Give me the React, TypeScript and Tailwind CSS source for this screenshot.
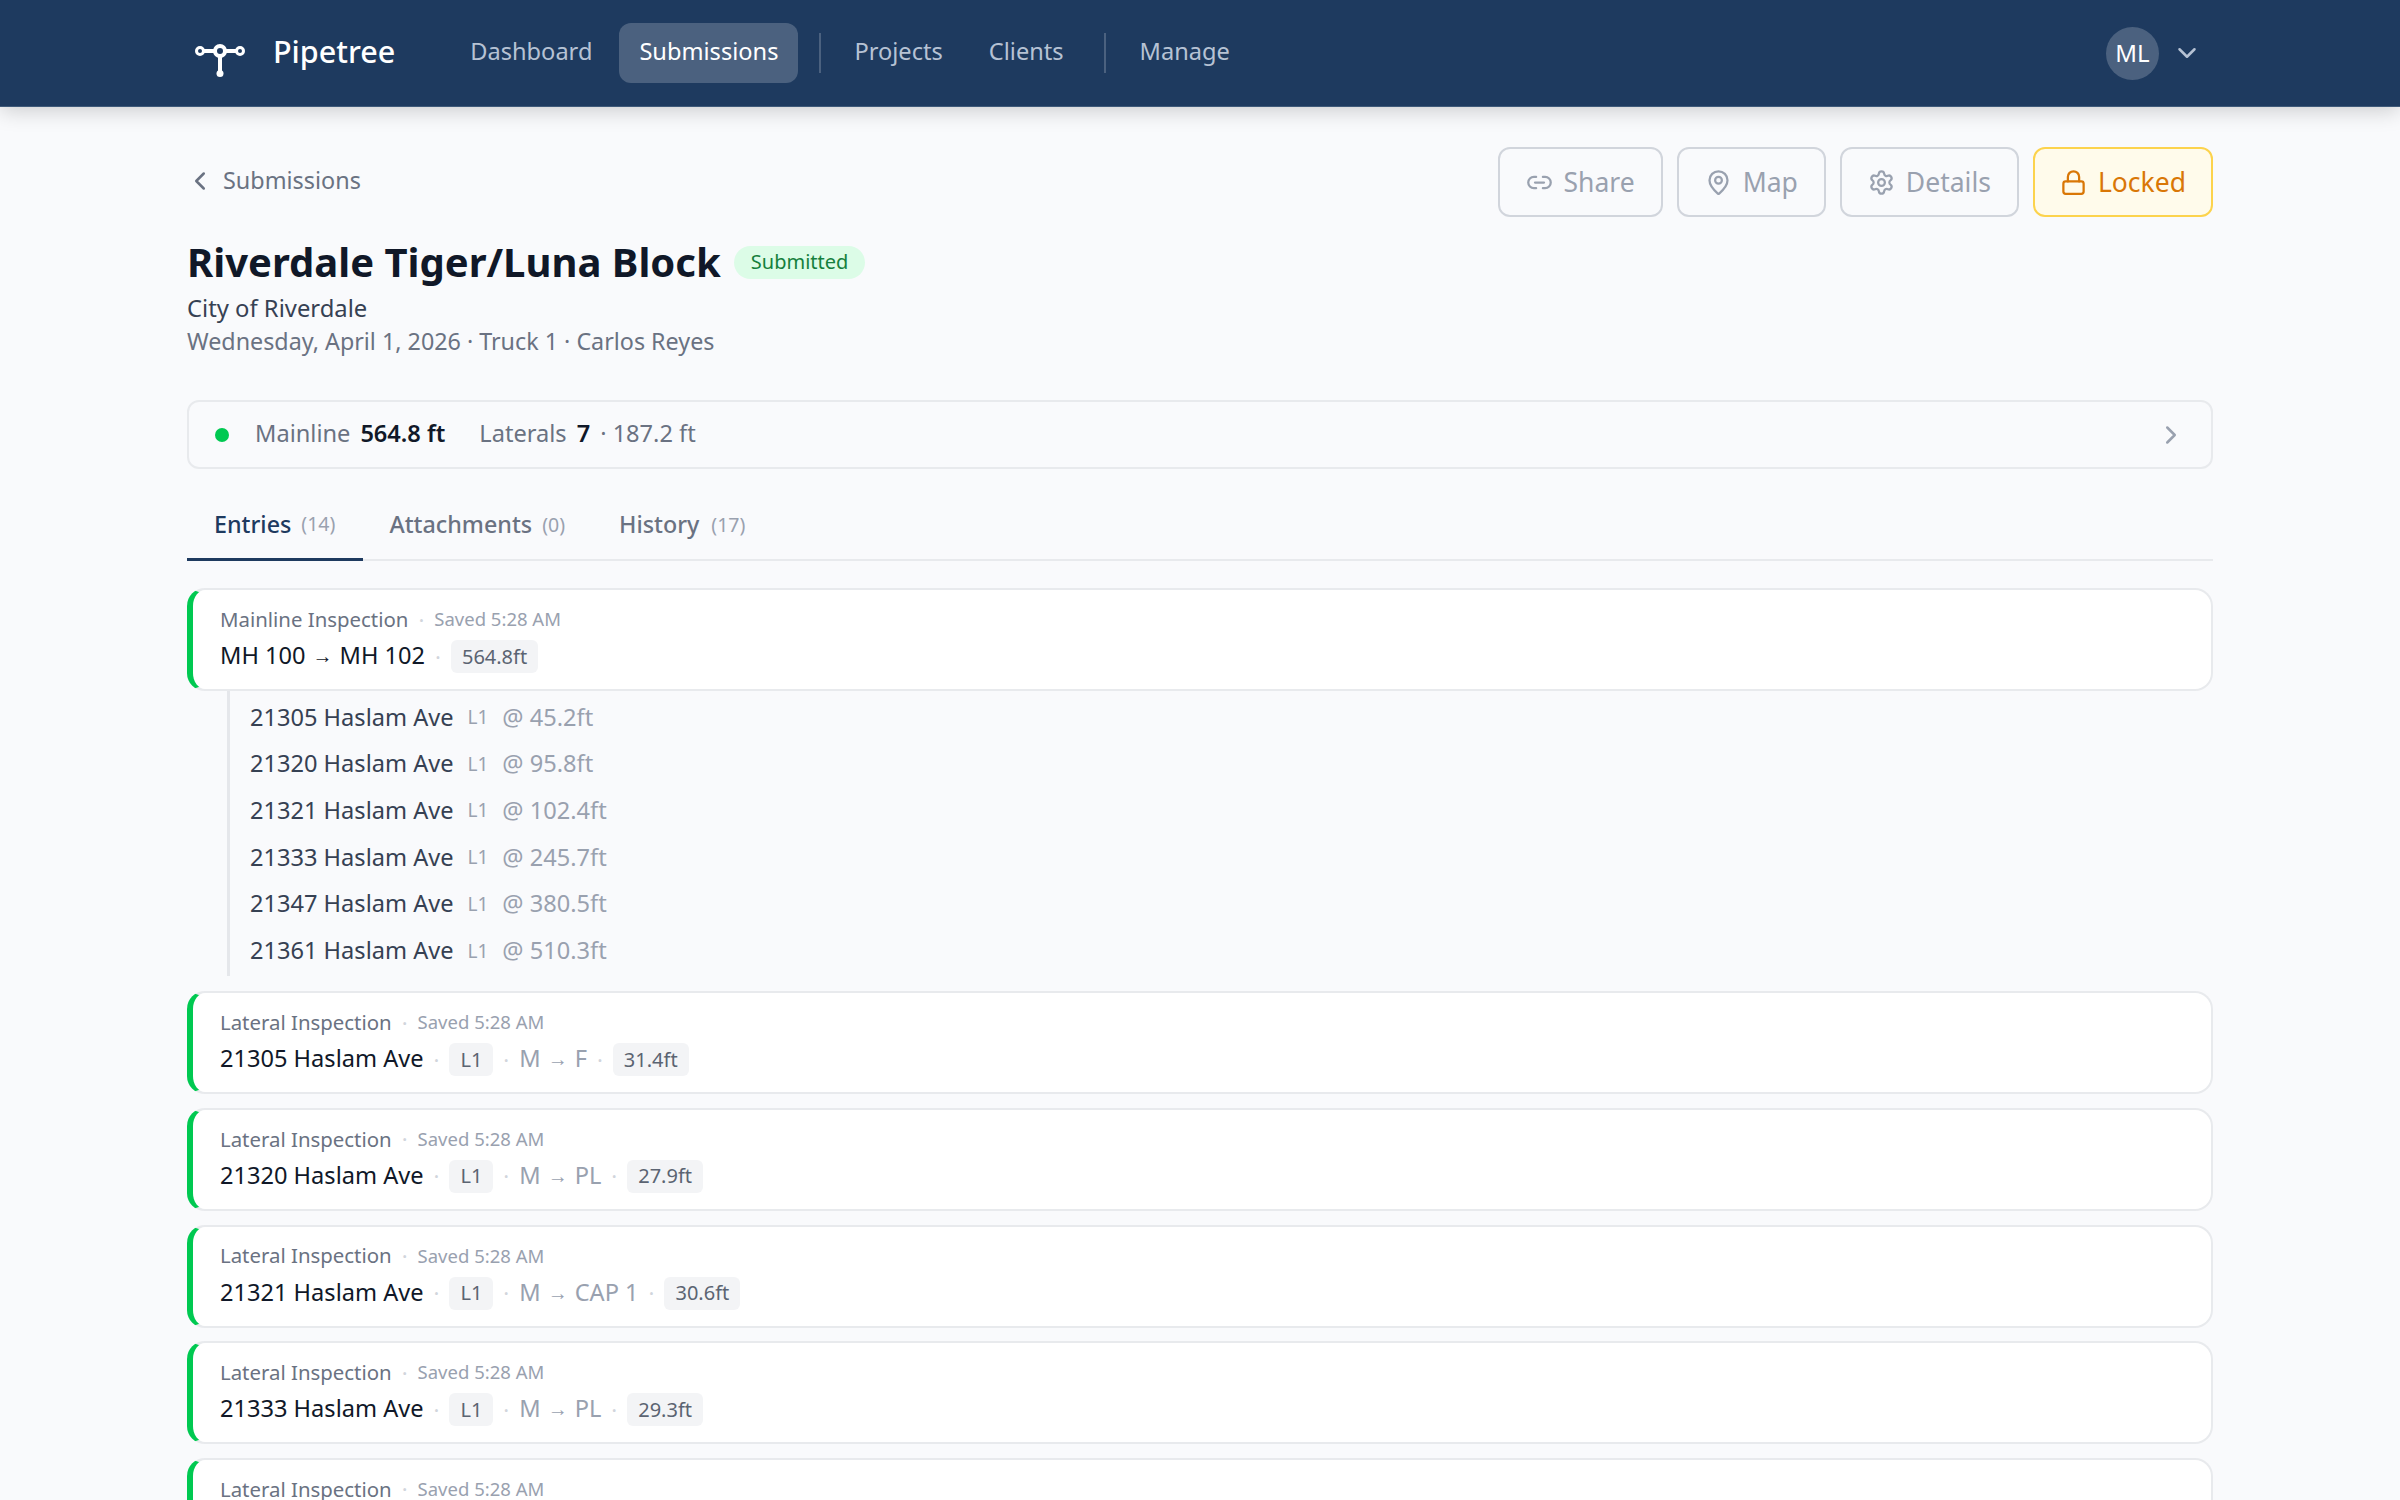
import React from "react";
import {
  ChevronDown,
  ChevronLeft,
  ChevronRight,
  Link2,
  Lock,
  MapPin,
  Settings,
} from "lucide-react";

const laterals = [
  { address: "21305 Haslam Ave", at: "45.2ft" },
  { address: "21320 Haslam Ave", at: "95.8ft" },
  { address: "21321 Haslam Ave", at: "102.4ft" },
  { address: "21333 Haslam Ave", at: "245.7ft" },
  { address: "21347 Haslam Ave", at: "380.5ft" },
  { address: "21361 Haslam Ave", at: "510.3ft" },
];

const entries = [
  { address: "21305 Haslam Ave", end: "F", length: "31.4ft" },
  { address: "21320 Haslam Ave", end: "PL", length: "27.9ft" },
  { address: "21321 Haslam Ave", end: "CAP 1", length: "30.6ft" },
  { address: "21333 Haslam Ave", end: "PL", length: "29.3ft" },
  { address: "21347 Haslam Ave", end: "PL", length: "28.4ft" },
];

const Logo = () => (
  <svg width="50" height="34" viewBox="0 0 50 34" fill="none" className="mt-[16px] shrink-0">
    <path d="M8 7h34M25 7v23" stroke="white" strokeWidth="4" />
    <circle cx="5" cy="7" r="3.5" fill="#1e3a5f" stroke="white" strokeWidth="3" />
    <circle cx="45" cy="7" r="3.5" fill="#1e3a5f" stroke="white" strokeWidth="3" />
    <circle cx="25" cy="7" r="5" fill="#1e3a5f" stroke="white" strokeWidth="4" />
    <circle cx="25" cy="29.5" r="3.5" fill="white" />
  </svg>
);

const NavLink = ({ label, className = "" }: { label: string; className?: string }) => (
  <a className={`flex h-[60px] items-center rounded-[12px] pb-[2px] text-[23.6px] text-[#b6c2d4] ${className}`}>
    {label}
  </a>
);

const ActionButton = ({
  icon,
  label,
  className,
}: {
  icon: React.ReactNode;
  label: string;
  className: string;
}) => (
  <button className={`flex h-[70px] items-center justify-center gap-[11px] rounded-[12px] border-2 pt-[1px] text-[26.5px] ${className}`}>
    {icon}
    {label}
  </button>
);

const Sep = () => <span className="px-[10px] text-[22px] text-gray-300">·</span>;

const Chip = ({ children }: { children: React.ReactNode }) => (
  <span className="mt-[1px] flex h-[33px] items-center rounded-[6px] bg-gray-100 px-[11px] text-[20px] text-[#5b6472]">
    {children}
  </span>
);

const EntryCard = ({
  title,
  children,
}: {
  title: string;
  children: React.ReactNode;
}) => (
  <div className="h-[103px] shrink-0 rounded-[18px] border-2 border-l-[6px] border-[#e8eaed] border-l-green-500 bg-white pl-[27px] pt-[14px]">
    <div className="flex h-[30px] items-center">
      <span className="text-[20.4px] text-gray-500">{title}</span>
      <Sep />
      <span className="text-[18.5px] text-gray-400">Saved 5:28 AM</span>
    </div>
    <div className="mt-[4px] flex h-[36px] items-center text-[23.6px] text-gray-900">{children}</div>
  </div>
);

const Arrow = ({ className = "text-gray-400" }: { className?: string }) => (
  <span className={`mx-[7px] text-[20px] ${className}`}>→</span>
);

export default function App() {
  return (
    <div
      className="h-screen overflow-hidden bg-[#f9fafc]"
      style={{ fontFamily: '"Noto Sans", sans-serif' }}
    >
      <header className="h-[107px] border-b border-[#3f5a7a] bg-[#1e3a5f] shadow-[0_4px_20px_rgba(0,0,0,0.18)]">
        <div className="mx-auto flex h-full w-[2026px] items-center pl-[8px] pr-[11px]">
          <Logo />
          <span className="-mt-[2px] ml-[28px] text-[30.5px] font-medium text-white">Pipetree</span>
          <nav className="ml-[75px] flex items-center">
            <NavLink label="Dashboard" />
            <NavLink label="Submissions" className="ml-[27px] bg-white/20 px-[20px] text-white" />
            <span className="ml-[21px] h-[40px] w-[2px] bg-white/20" />
            <NavLink label="Projects" className="ml-[33px]" />
            <NavLink label="Clients" className="ml-[46px]" />
            <span className="ml-[40px] h-[40px] w-[2px] bg-white/20" />
            <NavLink label="Manage" className="ml-[34px]" />
          </nav>
          <div className="ml-auto flex items-center gap-[13px]">
            <span className="flex h-[53px] w-[53px] items-center justify-center rounded-full bg-white/20 pb-[1px] text-[24px] text-white">
              ML
            </span>
            <ChevronDown size={30} strokeWidth={2} className="text-[#b6c2d4]" />
          </div>
        </div>
      </header>

      <main className="mx-auto w-[2026px] pt-[40px]">
        <div className="flex items-start justify-between">
          <a className="mt-[16px] flex items-center gap-[8px] text-[23.4px] text-gray-500">
            <ChevronLeft size={30} strokeWidth={2} className="-ml-[2px]" />
            Submissions
          </a>
          <div className="flex gap-[14px]">
            <ActionButton
              icon={<Link2 size={27} strokeWidth={2} />}
              label="Share"
              className="border-gray-300 px-[26px] text-gray-400"
            />
            <ActionButton
              icon={<MapPin size={27} strokeWidth={2} />}
              label="Map"
              className="border-gray-300 px-[26px] text-gray-400"
            />
            <ActionButton
              icon={<Settings size={27} strokeWidth={2} />}
              label="Details"
              className="border-gray-300 px-[26px] text-gray-400"
            />
            <ActionButton
              icon={<Lock size={27} strokeWidth={2} />}
              label="Locked"
              className="border-[#fcd34d] bg-[#fffbeb] px-[25px] text-[#d97706]"
            />
          </div>
        </div>

        <div className="mt-[15px] flex items-center gap-[13px]">
          <h1 className="text-[40px] font-bold leading-[59px] text-gray-900">
            Riverdale Tiger/Luna Block
          </h1>
          <span className="mt-[1px] flex h-[33px] items-center rounded-full bg-[#dcfce7] px-[17px] text-[20px] text-[#15803d]">
            Submitted
          </span>
        </div>
        <p className="text-[23.8px] leading-[34px] text-gray-700">City of Riverdale</p>
        <p className="text-[23.3px] leading-[33px] text-gray-500">
          Wednesday, April 1, 2026 · Truck 1 · Carlos Reyes
        </p>

        <div className="mt-[42px] flex h-[69px] items-center rounded-[12px] border-2 border-[#e8eaed] pl-[26px] pr-[25px] text-[23.6px]">
          <span className="h-[14px] w-[14px] rounded-full bg-green-500" />
          <span className="ml-[26px] -mt-[2px] text-gray-500">Mainline</span>
          <span className="ml-[10px] -mt-[2px] font-semibold text-gray-900">564.8 ft</span>
          <span className="ml-[34px] -mt-[2px] text-gray-500">Laterals</span>
          <span className="ml-[10px] -mt-[2px] font-semibold text-gray-900">7</span>
          <span className="ml-[10px] -mt-[2px] text-gray-500">· 187.2 ft</span>
          <ChevronRight size={30} strokeWidth={2} className="ml-auto text-gray-400" />
        </div>

        <div className="mt-[30px] flex h-[62px] border-b-2 border-[#e8eaed] text-[23.3px]">
          <div className="-mb-[2px] flex items-center gap-[10px] border-b-[3px] border-[#1e3a5f] pb-[9px] pl-[27px] pr-[28px] font-medium text-[#1e3a5f]">
            Entries <span className="text-[19.5px] font-normal text-gray-400">(14)</span>
          </div>
          <div className="flex items-center gap-[10px] pb-[9px] pl-[26px] pr-[27px] font-medium text-gray-500">
            Attachments <span className="text-[19.5px] font-normal text-gray-400">(0)</span>
          </div>
          <div className="flex items-center gap-[12px] px-[27px] pb-[9px] font-medium text-gray-500">
            History <span className="text-[19.5px] font-normal text-gray-400">(17)</span>
          </div>
        </div>

        <div className="mt-[27px] flex flex-col">
          <EntryCard title="Mainline Inspection">
            MH 100 <Arrow className="text-gray-900" /> MH 102
            <Sep />
            <Chip>564.8ft</Chip>
          </EntryCard>

          <div className="mb-[15px] ml-[40px] flex flex-col border-l-[3px] border-gray-200 pb-[2px] pl-[20px] pt-[3px]">
            {laterals.map((lateral) => (
              <div key={lateral.address} className="flex h-[46.7px] items-center text-[23.6px]">
                <span className="text-gray-700">{lateral.address}</span>
                <span className="ml-[14px] text-[19px] text-gray-400">L1</span>
                <span className="ml-[14px] text-gray-400">@ {lateral.at}</span>
              </div>
            ))}
          </div>

          <div className="flex flex-col gap-[13.7px]">
            {entries.map((entry) => (
              <EntryCard key={entry.address} title="Lateral Inspection">
                {entry.address}
                <Sep />
                <Chip>L1</Chip>
                <Sep />
                <span className="text-gray-400">M</span>
                <Arrow />
                <span className="text-gray-400">{entry.end}</span>
                <Sep />
                <Chip>{entry.length}</Chip>
              </EntryCard>
            ))}
          </div>
        </div>
      </main>
    </div>
  );
}
